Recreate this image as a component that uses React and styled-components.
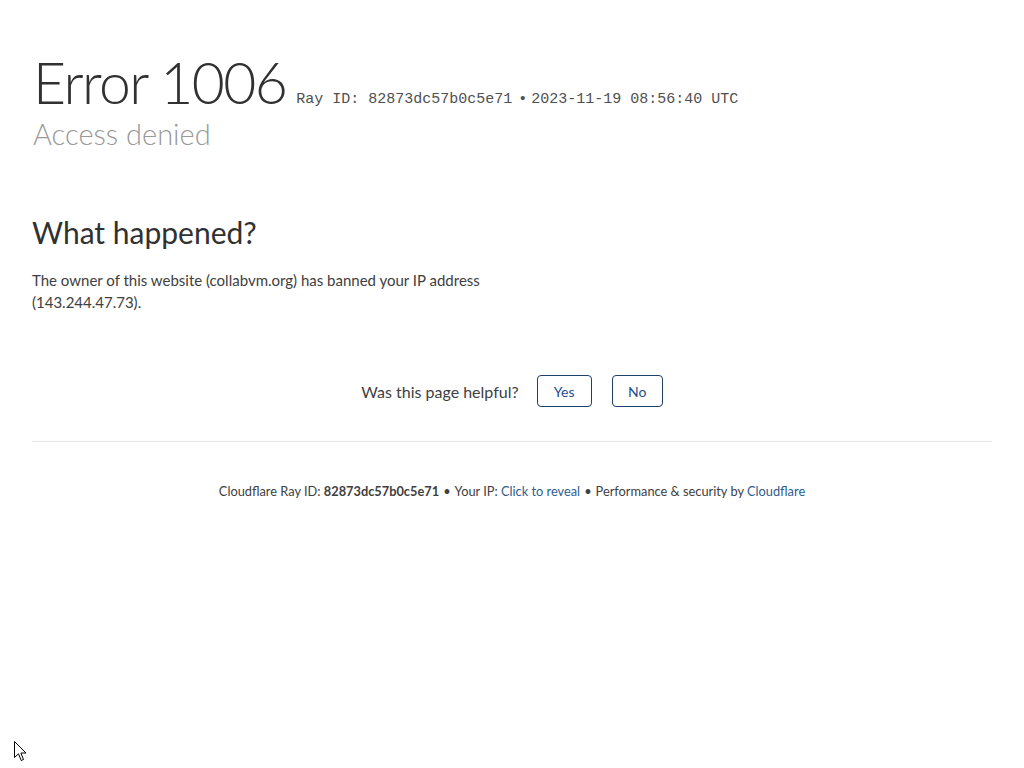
import React from 'react';
import styled, { createGlobalStyle } from 'styled-components';

const GlobalStyle = createGlobalStyle`
  html, body {
    margin: 0;
    padding: 0;
    background: #fff;
  }
  body {
    font-family: Lato, "Open Sans", "Liberation Sans", sans-serif;
    color: #404040;
    -webkit-font-smoothing: antialiased;
  }
`;

const Page = styled.div`
  width: 960px;
  margin: 0 auto;
  padding-top: 48px;
`;

const Header = styled.header`
  padding-left: 1px;
`;

const TitleRow = styled.div`
  display: flex;
  align-items: baseline;
`;

const Title = styled.h1`
  margin: 0 10px 0 0;
  font-size: 57px;
  line-height: 68px;
  font-weight: 300;
  letter-spacing: -1.6px;
  color: #313131;
`;

const RayInfo = styled.span`
  font-family: "Liberation Mono", "Courier New", monospace;
  font-size: 15px;
  color: #505050;
  position: relative;
  top: -1px;
  .dot {
    margin: 0 4px 0 6px;
  }
`;

const Subtitle = styled.h2`
  margin: 0;
  font-size: 29px;
  line-height: 36px;
  font-weight: 300;
  color: #999;
`;

const Section = styled.section`
  margin-top: 60px;
  width: 480px;
`;

const SectionTitle = styled.h2`
  margin: 0 0 17px;
  font-size: 30px;
  line-height: 40px;
  font-weight: 400;
  color: #313131;
`;

const Paragraph = styled.p`
  margin: 0;
  font-size: 15px;
  line-height: 22px;
  color: #404040;
`;

const Feedback = styled.div`
  margin-top: 62px;
  display: flex;
  justify-content: center;
  align-items: center;
  gap: 20px;
  padding-bottom: 34px;
  border-bottom: 1px solid #e5e5e5;
`;

const Question = styled.span`
  font-size: 16px;
  color: #404040;
  margin-right: -2px;
`;

const Choice = styled.button`
  font-family: inherit;
  font-size: 14px;
  color: #1d4f91;
  background: #fff;
  border: 1px solid #1d3f68;
  border-radius: 4px;
  height: 32px;
  width: ${p => p.$w}px;
  padding: 0;
  cursor: pointer;
`;

const Footer = styled.footer`
  margin-top: 41px;
  text-align: center;
  font-size: 12.8px;
  color: #404040;
  strong {
    font-weight: 700;
  }
  a {
    color: #2f5d8e;
    text-decoration: none;
  }
`;

const Sep = styled.span`
  margin: 0 4px;
`;

const Cursor = styled.svg`
  position: fixed;
  left: 14px;
  bottom: 6px;
`;

export default function App() {
  return (
    <>
      <GlobalStyle />
      <Page>
        <Header>
          <TitleRow>
            <Title>Error 1006</Title>
            <RayInfo>
              Ray ID: 82873dc57b0c5e71<span className="dot">•</span>2023-11-19 08:56:40 UTC
            </RayInfo>
          </TitleRow>
          <Subtitle>Access denied</Subtitle>
        </Header>

        <Section>
          <SectionTitle>What happened?</SectionTitle>
          <Paragraph>
            The owner of this website (collabvm.org) has banned your IP address (143.244.47.73).
          </Paragraph>
        </Section>

        <Feedback>
          <Question>Was this page helpful?</Question>
          <Choice $w={55}>Yes</Choice>
          <Choice $w={51}>No</Choice>
        </Feedback>

        <Footer>
          Cloudflare Ray ID: <strong>82873dc57b0c5e71</strong>
          <Sep>•</Sep>
          Your IP: <a href="#">Click to reveal</a>
          <Sep>•</Sep>
          Performance &amp; security by <a href="#">Cloudflare</a>
        </Footer>
      </Page>
      <Cursor width="13" height="21" viewBox="0 0 13 21">
        <path d="M0.5 0.5 L0.5 16.5 L4.5 12.8 L7.2 19.5 L9.5 18.5 L6.9 12 L12 12 Z" fill="#fff" stroke="#000" strokeWidth="1" />
      </Cursor>
    </>
  );
}
